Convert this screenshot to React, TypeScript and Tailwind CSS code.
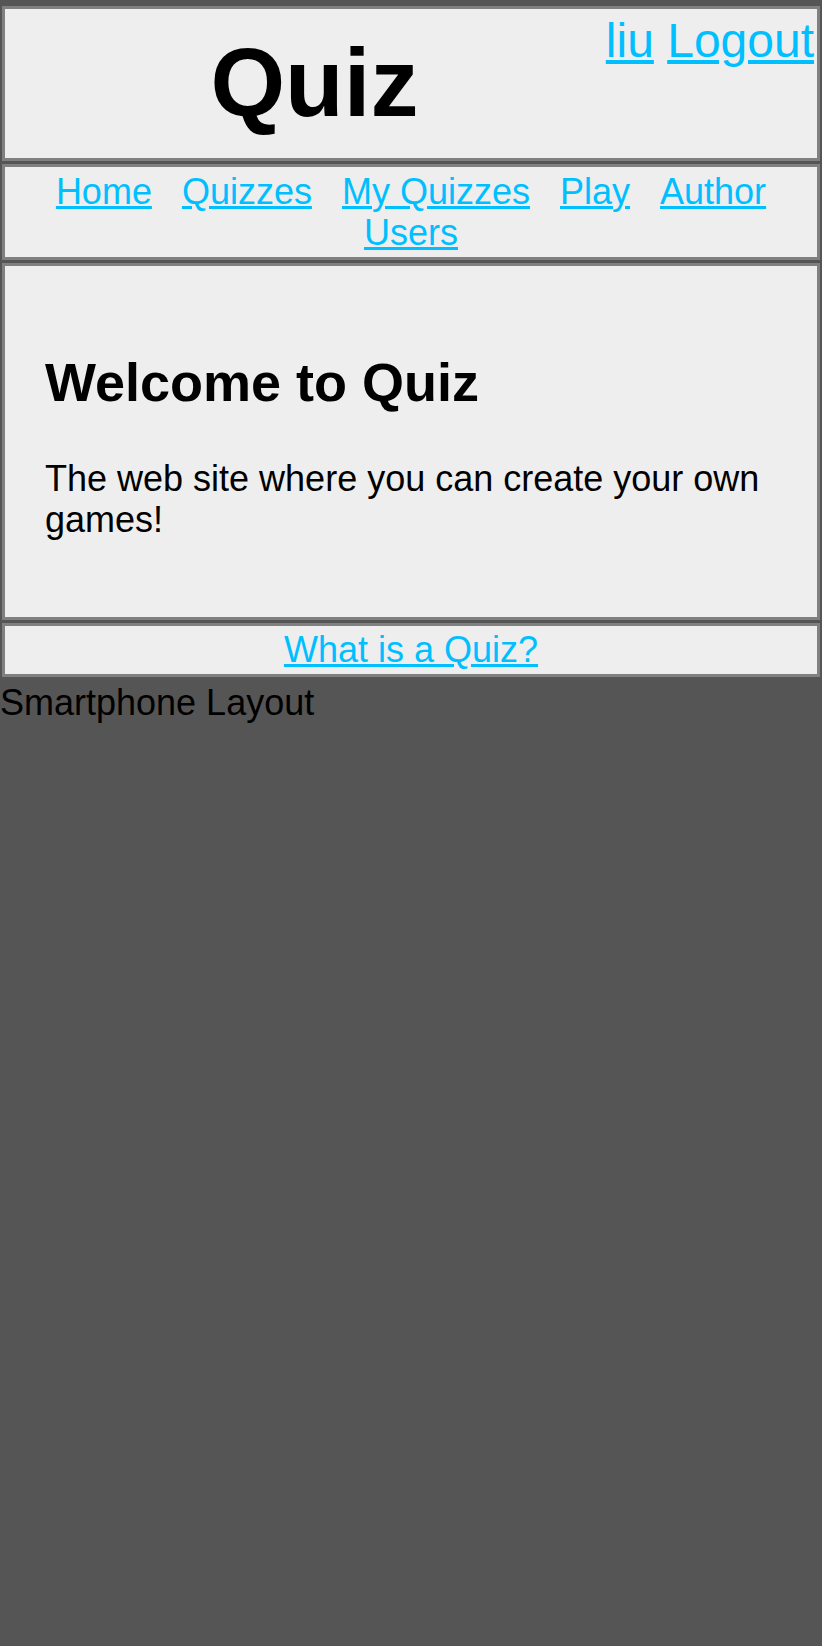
const navLinks = ["Home", "Quizzes", "My Quizzes", "Play", "Author", "Users"];

export default function App() {
  return (
    <div className="min-h-[1646px] bg-[#555555] font-['Liberation_Sans',Arial,sans-serif] text-[36px] leading-[1.15] text-black">
      <div className="flex flex-col gap-[3px] px-[2px] pt-[6px]">
        <header className="flex h-[155px] border-[3px] border-[#808080] bg-[#eeeeee]">
          <h1 className="flex-1 self-center pl-[18px] text-center text-[96px] font-bold leading-[1.15]">
            Quiz
          </h1>
          <div className="shrink-0 pr-[3px] pt-[4px] text-[48px] leading-[1.15]">
            <a href="#" className="text-[#00bfff] underline">
              liu
            </a>{" "}
            <a href="#" className="text-[#00bfff] underline">
              Logout
            </a>
          </div>
        </header>

        <nav className="flex h-[96px] items-center border-[3px] border-[#808080] bg-[#eeeeee]">
          <ul className="flex w-full flex-wrap justify-center gap-x-[30px]">
            {navLinks.map((l) => (
              <li key={l}>
                <a href="#" className="text-[#00bfff] underline">
                  {l}
                </a>
              </li>
            ))}
          </ul>
        </nav>

        <main className="border-[3px] border-[#808080] bg-[#eeeeee] p-[40px]">
          <h2 className="my-[45px] text-[54px] font-bold leading-[1.15]">Welcome to Quiz</h2>
          <p className="my-[36px]">The web site where you can create your own games!</p>
        </main>

        <footer className="flex h-[54px] items-center justify-center border-[3px] border-[#808080] bg-[#eeeeee]">
          <a href="#" className="text-[#00bfff] underline">
            What is a Quiz?
          </a>
        </footer>
      </div>
      <div className="pt-[5px]">Smartphone Layout</div>
    </div>
  );
}
